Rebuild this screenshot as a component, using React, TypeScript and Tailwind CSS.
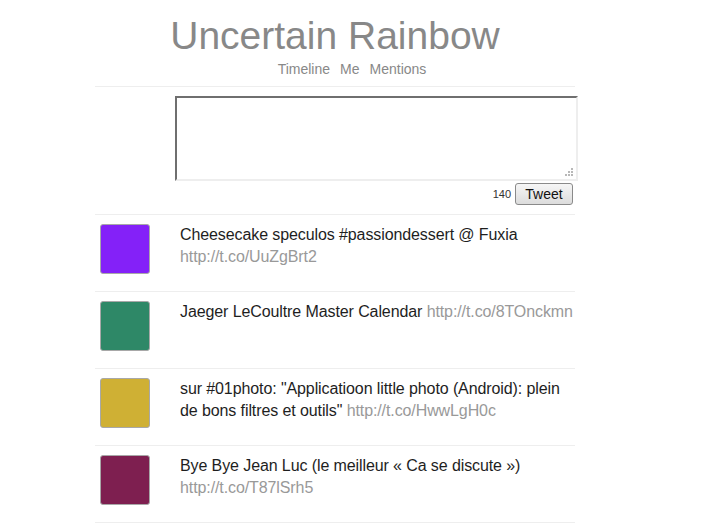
import React from 'react';

interface Tweet {
    id: number;
    color: string;
    text: string;
    link: string;
    breakBefore?: boolean;
    noWrap?: boolean;
}

const tweets: Tweet[] = [
    { id: 1, color: 'bg-[#8421f8]', text: 'Cheesecake speculos #passiondessert @ Fuxia', link: 'http://t.co/UuZgBrt2', breakBefore: true },
    { id: 2, color: 'bg-[#2e8867]', text: 'Jaeger LeCoultre Master Calendar', link: 'http://t.co/8TOnckmn', noWrap: true },
    { id: 3, color: 'bg-[#cfb034]', text: 'sur #01photo: "Applicatioon little photo (Android): plein de bons filtres et outils"', link: 'http://t.co/HwwLgH0c' },
    { id: 4, color: 'bg-[#7e1f50]', text: 'Bye Bye Jean Luc (le meilleur « Ca se discute »)', link: 'http://t.co/T87lSrh5', breakBefore: true },
];

const App = () => {
    return (
        <div className="min-h-screen bg-white" style={{ fontFamily: '"Liberation Sans", Arial, sans-serif' }}>
            <div className="ml-[95px] w-[480px]">
                {/* Header */}
                <div className="border-b border-[#eeeeee] pt-[13px] pb-[7px]">
                    <h1 className="text-center text-[39px] leading-[46px] text-[#888888]">Uncertain Rainbow</h1>
                    <div className="flex justify-center gap-[10px] pl-[34px] text-[14px] leading-[20px] text-[#888888]">
                        <span>Timeline</span>
                        <span>Me</span>
                        <span>Mentions</span>
                    </div>
                </div>

                {/* Compose */}
                <div className="relative mt-[9px] ml-[80px] w-[403px] h-[85px]">
                    <textarea className="block w-full h-full resize-none border-2 border-t-[#6f6f6f] border-l-[#6f6f6f] border-r-[#eeeeee] border-b-[#eeeeee] bg-white outline-none" />
                    <svg className="absolute right-[5px] bottom-[5px]" width="8" height="8" viewBox="0 0 8 8">
                        <rect x="6" y="0" width="2" height="2" fill="#b8b8b8" />
                        <rect x="3" y="3" width="2" height="2" fill="#b8b8b8" />
                        <rect x="6" y="3" width="2" height="2" fill="#b8b8b8" />
                        <rect x="0" y="6" width="2" height="2" fill="#b8b8b8" />
                        <rect x="3" y="6" width="2" height="2" fill="#b8b8b8" />
                        <rect x="6" y="6" width="2" height="2" fill="#b8b8b8" />
                    </svg>
                </div>
                <div className="mt-[2px] mr-[2px] mb-[9px] flex items-center justify-end gap-[4px]">
                    <span className="text-[11px] text-[#333333]">140</span>
                    <button className="h-[22px] w-[58px] rounded-[3px] border border-[#8a8a8a] bg-gradient-to-b from-[#f6f6f6] to-[#dcdcdc] text-[14px] leading-[20px] text-[#111111]">
                        Tweet
                    </button>
                </div>

                {/* Tweets */}
                <div className="border-b border-[#eeeeee]">
                    {tweets.map((tweet) => (
                        <div key={tweet.id} className="flex h-[77px] border-t border-[#eeeeee] pt-[9px] pl-[5px]">
                            <div className={`h-[50px] w-[50px] shrink-0 rounded-[3px] border border-[#a8a8a8] ${tweet.color}`}></div>
                            <p className={`ml-[30px] w-[395px] text-[16px] leading-[22px] tracking-[-0.1px] text-[#1e1e1e] ${tweet.noWrap ? 'whitespace-nowrap' : ''}`}>
                                {tweet.text}
                                {tweet.breakBefore ? <br /> : ' '}
                                <span className="text-[#999999]">{tweet.link}</span>
                            </p>
                        </div>
                    ))}
                </div>
            </div>
        </div>
    );
};

export default App;
